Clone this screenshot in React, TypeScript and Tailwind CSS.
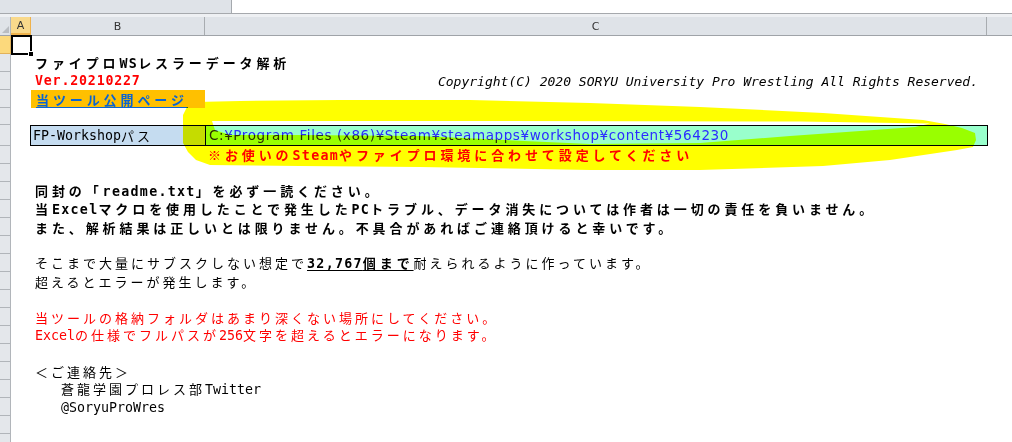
import type { ReactNode } from "react";

// Ascii runs get the narrow mono face, the rest keeps the CJK face with extra spacing
function Mixed({ text, bold }: { text: string; bold?: boolean }) {
  const parts = text.split(/([\x20-\x7e]+)/).filter(Boolean);
  return (
    <>
      {parts.map((p, i) =>
        /^[\x20-\x7e]+$/.test(p) ? (
          <span
            key={i}
            className={
              bold
                ? "font-['DejaVu_Sans_Mono'] text-[13.3px] tracking-[1.3px]"
                : "font-['DejaVu_Sans_Mono'] text-[13.3px] tracking-[0px]"
            }
          >
            {p}
          </span>
        ) : (
          <span key={i} className={bold ? "tracking-[3.9px]" : "tracking-[3px]"}>
            {p}
          </span>
        )
      )}
    </>
  );
}

function Row({
  h = "h-[18px]",
  selected,
  children,
}: {
  h?: string;
  selected?: boolean;
  children?: ReactNode;
}) {
  return (
    <div className={`flex ${h}`}>
      <div
        className={
          selected
            ? "w-[11px] shrink-0 border-b border-r border-[#e2b25a] bg-[#fcd97c]"
            : "w-[11px] shrink-0 border-b border-r border-[#b1b5ba] bg-[#e4e7eb]"
        }
      />
      <div className="flex min-w-0 flex-1 items-center whitespace-nowrap">{children}</div>
    </div>
  );
}

function Highlighter() {
  const outer =
    "M183 115 L187 107 L196 102 L240 101 L340 100 L470 100 L590 103 L700 107 L823 113 L923 120 L945 124 L962 128 L975 133 L976 140 L973 147 L957 150 L890 160 L823 166 L700 170 L590 170 L420 167 L300 166 L210 165 L196 160 L188 152 L183 143 Z";
  const hole =
    "M212 121 L500 121 L800 121.5 L930 123.5 L915 127 L860 131 L790 136 L700 143 L590 144 L420 136 L300 135 L230 135 L215 130 Z";
  return (
    <svg
      className="pointer-events-none absolute left-0 top-0 mix-blend-multiply"
      width="1012"
      height="442"
      viewBox="0 0 1012 442"
    >
      <path d={`${outer} ${hole}`} fill="#ffff00" fillRule="evenodd" />
    </svg>
  );
}

export default function App() {
  return (
    <div className="relative h-[442px] w-[1012px] overflow-hidden bg-white font-['Noto_Sans_CJK_JP',sans-serif] text-[13px] leading-none text-black">
      {/* formula bar strip */}
      <div className="flex h-[13px]">
        <div className="w-[232px] border-r border-[#a5a9ae] bg-[#dfe3e8]" />
        <div className="flex-1 bg-white" />
      </div>
      <div className="h-px bg-[#a6a9ad]" />
      <div className="h-[3px] bg-[#eef0f3]" />

      {/* column headers */}
      <div className="flex h-[19px] border-b border-[#9fa3a8] bg-[#dfe3e8] font-['DejaVu_Sans',sans-serif] text-[11px] text-[#333]">
        <div className="relative w-[11px] border-r border-[#b1b5ba]">
          <svg className="absolute bottom-[2px] right-[1px]" width="7" height="7" viewBox="0 0 7 7">
            <path d="M7 0 L7 7 L0 7 Z" fill="#b9bdc2" />
          </svg>
        </div>
        <div className="flex w-[20px] items-center justify-center border-b-2 border-r border-[#efb24c] bg-[#f9d98b]">
          A
        </div>
        <div className="flex w-[174px] items-center justify-center border-r border-[#a8acb0]">B</div>
        <div className="flex w-[782px] items-center justify-center border-r border-[#a8acb0]">C</div>
        <div className="flex-1" />
      </div>

      {/* sheet rows */}
      <Row selected />
      <Row>
        <div className="pl-[24px] font-bold">
          <Mixed text="ファイプロWSレスラーデータ解析" bold />
        </div>
      </Row>
      <Row>
        <div className="w-[194px] pl-[24px] font-['DejaVu_Sans_Mono'] text-[13.3px] font-bold tracking-[0.8px] text-[#ff0000]">
          Ver.20210227
        </div>
        <div className="w-[782px] pr-[9px] text-right font-['DejaVu_Sans_Mono'] text-[13px] italic">
          Copyright(C) 2020 SORYU University Pro Wrestling All Rights Reserved.
        </div>
      </Row>
      <Row>
        <div className="ml-[20px] flex h-full w-[174px] items-center bg-[#ffc000] pl-[5px]">
          <span className="font-bold tracking-[3.9px] text-[#0a64d2] underline underline-offset-2">
            当ツール公開ページ
          </span>
        </div>
      </Row>
      <Row h="h-[17px]" />
      <Row h="h-[21px]">
        <div className="ml-[19px] flex h-full border border-black">
          <div className="flex w-[175px] items-center border-r border-black bg-[#c5dcf0] pl-[2px]">
            <Mixed text="FP-Workshopパス" />
          </div>
          <div className="flex w-[781px] items-center bg-[#99ffcc] pl-[3px] font-['DejaVu_Sans',sans-serif] text-[13.5px] tracking-[0.6px] text-[#2b2bff]">
            C:¥Program Files (x86)¥Steam¥steamapps¥workshop¥content¥564230
          </div>
        </div>
      </Row>
      <Row>
        <div className="pl-[197px] font-bold text-[#ff0000]">
          <Mixed text="※お使いのSteamやファイプロ環境に合わせて設定してください" bold />
        </div>
      </Row>
      <Row />
      <Row>
        <div className="pl-[24px] font-bold">
          <Mixed text="同封の「readme.txt」を必ず一読ください。" bold />
        </div>
      </Row>
      <Row>
        <div className="pl-[24px] font-bold">
          <Mixed
            text="当Excelマクロを使用したことで発生したPCトラブル、データ消失については作者は一切の責任を負いません。"
            bold
          />
        </div>
      </Row>
      <Row>
        <div className="pl-[24px] font-bold">
          <Mixed text="また、解析結果は正しいとは限りません。不具合があればご連絡頂けると幸いです。" bold />
        </div>
      </Row>
      <Row />
      <Row>
        <div className="pl-[24px]">
          <Mixed text="そこまで大量にサブスクしない想定で" />
          <span className="font-bold underline underline-offset-2">
            <Mixed text="32,767個まで" bold />
          </span>
          <Mixed text="耐えられるように作っています。" />
        </div>
      </Row>
      <Row>
        <div className="pl-[24px]">
          <Mixed text="超えるとエラーが発生します。" />
        </div>
      </Row>
      <Row />
      <Row>
        <div className="pl-[24px] text-[#ff0000]">
          <Mixed text="当ツールの格納フォルダはあまり深くない場所にしてください。" />
        </div>
      </Row>
      <Row>
        <div className="pl-[24px] text-[#ff0000]">
          <Mixed text="Excelの仕様でフルパスが256文字を超えるとエラーになります。" />
        </div>
      </Row>
      <Row />
      <Row>
        <div className="pl-[24px]">
          <Mixed text="＜ご連絡先＞" />
        </div>
      </Row>
      <Row>
        <div className="pl-[50px]">
          <Mixed text="蒼龍学園プロレス部Twitter" />
        </div>
      </Row>
      <Row>
        <div className="pl-[50px]">
          <Mixed text="@SoryuProWres" />
        </div>
      </Row>
      <Row />
      <Row />

      {/* active cell A1 */}
      <div className="pointer-events-none absolute left-[11px] top-[35px] h-[20px] w-[21px] border-2 border-black" />
      <div className="pointer-events-none absolute left-[28px] top-[51px] h-[6px] w-[6px] border border-white bg-black" />

      <Highlighter />
    </div>
  );
}
